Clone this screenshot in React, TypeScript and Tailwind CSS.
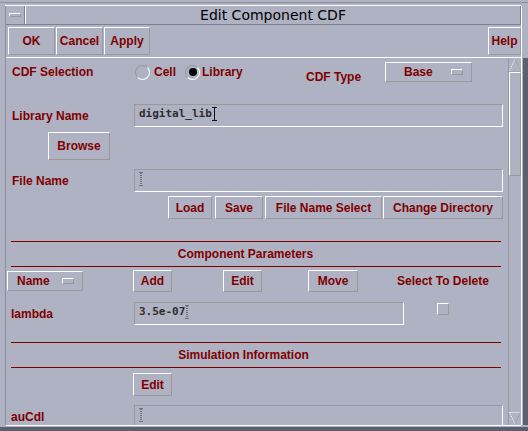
import React from "react"

// Motif-style bevels
const raised = "border border-t-white border-l-white border-b-[#999999] border-r-[#999999]"
const sunken = "border border-t-[#999999] border-l-[#999999] border-b-white border-r-white"
const label = "font-bold text-[12px] text-[#800000] leading-[14px] whitespace-nowrap"
const mono = "font-['DejaVu_Sans_Mono',monospace] font-bold text-[11px] text-[#2e2e2e] leading-[14px]"

function Btn({ text, className }: { text: string; className: string }) {
  return (
    <div className={`${raised} ${label} flex shrink-0 items-center justify-center ${className}`}>
      {text}
    </div>
  )
}

function Cursor({ active }: { active?: boolean }) {
  return active ? (
    <svg width="5" height="14" viewBox="0 0 5 14" className="shrink-0">
      <path d="M0 0.5H5M2.5 0.5V13.5M0 13.5H5" stroke="#111" strokeWidth="1" fill="none" />
    </svg>
  ) : (
    <svg width="5" height="14" viewBox="0 0 5 14" className="shrink-0">
      <path d="M0.5 0.5H3.5M2 1V13M0.5 13.5H3.5" stroke="#333" strokeWidth="1" strokeDasharray="1 1" fill="none" />
    </svg>
  )
}

function Field({ value, className, active }: { value?: string; className: string; active?: boolean }) {
  return (
    <div className={`${sunken} flex shrink-0 items-start pl-[4px] pt-[2px] ${className}`}>
      {value && <span className={mono}>{value}</span>}
      <Cursor active={active} />
    </div>
  )
}

function Radio({ on }: { on?: boolean }) {
  return (
    <div className="flex h-[15px] w-[15px] shrink-0 items-center justify-center rounded-full border border-t-[#999999] border-l-[#999999] border-b-white border-r-white">
      {on && <div className="h-[8px] w-[8px] rounded-full bg-black" />}
    </div>
  )
}

function Section({ title, textWidth }: { title: string; textWidth: string }) {
  return (
    <div className="flex flex-col">
      <div className="ml-[5px] h-[1px] w-[490px] bg-[#800000]" />
      <div className={`${label} flex h-[24px] items-center justify-center ${textWidth}`}>{title}</div>
      <div className="ml-[5px] h-[1px] w-[490px] bg-[#800000]" />
    </div>
  )
}

function Arrow({ down }: { down?: boolean }) {
  return down ? (
    <svg width="12" height="13" viewBox="0 0 12 13">
      <path d="M0.5 0.5H11.5" stroke="#fff" strokeDasharray="1 1" />
      <path d="M0.5 0.5L6 12" stroke="#fff" strokeDasharray="1 1" />
      <path d="M11.5 0.5L6 12" stroke="#999" strokeDasharray="1 1" />
    </svg>
  ) : (
    <svg width="12" height="14" viewBox="0 0 12 14">
      <path d="M6 1L0.5 13" stroke="#fff" strokeDasharray="1 1" />
      <path d="M6 1L11.5 13" stroke="#999" strokeDasharray="1 1" />
      <path d="M0.5 13.5H11.5" stroke="#999" strokeDasharray="1 1" />
    </svg>
  )
}

export default function App() {
  return (
    <div className="flex h-[431px] w-[528px] flex-col overflow-hidden bg-[#aeb2c3] font-['Liberation_Sans',Arial,sans-serif]">
      {/* top frame strip */}
      <div className="flex h-[6px] shrink-0 flex-col">
        <div className="h-[2px]" />
        <div className="h-[1px] bg-[#8d909c]" />
        <div className="h-[2px]" />
        <div className="ml-[5px] mr-[7px] h-[1px] bg-white" />
      </div>

      <div className="flex h-[419px] shrink-0">
        <div className="w-[5px] shrink-0" />

        <div className="flex w-[516px] shrink-0 flex-col border-l border-l-[#8d909c]">
          {/* title bar */}
          <div className="flex h-[19px] shrink-0 border-b border-b-[#7e8190]">
            <div className="flex w-[19px] shrink-0 items-center justify-center border-r border-r-[#7e8190]">
              <div className={`${raised} h-[4px] w-[12px]`} />
            </div>
            <div className="flex flex-1 items-center justify-center border-l border-l-white border-r border-r-[#7e8190] font-['DejaVu_Sans',sans-serif] text-[14px] leading-[16px] text-black">
              Edit Component CDF
            </div>
          </div>

          {/* action buttons */}
          <div className="flex h-[32px] shrink-0 items-start pl-[2px] pt-[2px]">
            <Btn text="OK" className="h-[28px] w-[47px]" />
            <Btn text="Cancel" className="ml-[1px] h-[28px] w-[47px]" />
            <Btn text="Apply" className="ml-[1px] h-[28px] w-[46px]" />
            <Btn text="Help" className="ml-auto h-[28px] w-[33px]" />
          </div>
          <div className="h-[1px] shrink-0 bg-white" />

          {/* scrolled form */}
          <div className="flex h-[367px] shrink-0">
            <div className="flex w-[502px] shrink-0 flex-col overflow-hidden">
              <div className="mt-[3px] flex h-[22px] shrink-0 items-center">
                <div className={`${label} w-[128px] pl-[6px]`}>CDF Selection</div>
                <div className="flex w-[172px] items-center">
                  <div className="ml-[1px]"><Radio /></div>
                  <span className={`${label} ml-[4px]`}>Cell</span>
                  <div className="ml-[9px]"><Radio on /></div>
                  <span className={`${label} ml-[2px]`}>Library</span>
                </div>
                <div className={`${label} mt-[10px] w-[79px]`}>CDF Type</div>
                <div className={`${raised} flex h-[20px] w-[87px] items-center`}>
                  <span className={`${label} ml-[18px]`}>Base</span>
                  <div className={`${raised} ml-auto mr-[8px] h-[6px] w-[12px]`} />
                </div>
              </div>

              <div className="mt-[21px] flex h-[23px] shrink-0 items-center">
                <div className={`${label} w-[128px] pl-[6px]`}>Library Name</div>
                <Field value="digital_lib" active className="h-[23px] w-[369px]" />
              </div>

              <div className="mt-[5px] flex shrink-0 pl-[42px]">
                <Btn text="Browse" className="h-[28px] w-[62px]" />
              </div>

              <div className="mt-[9px] flex h-[23px] shrink-0 items-center">
                <div className={`${label} w-[128px] pl-[6px]`}>File Name</div>
                <Field className="h-[23px] w-[369px]" />
              </div>

              <div className="mt-[4px] flex shrink-0 pl-[162px]">
                <Btn text="Load" className="h-[23px] w-[44px]" />
                <Btn text="Save" className="ml-[3px] h-[23px] w-[48px]" />
                <Btn text="File Name Select" className="ml-[2px] h-[23px] w-[117px]" />
                <Btn text="Change Directory" className="ml-[1px] h-[23px] w-[120px]" />
              </div>

              <div className="mt-[22px] shrink-0">
                <Section title="Component Parameters" textWidth="w-[479px]" />
              </div>

              <div className="mt-[3px] flex h-[22px] shrink-0 items-center">
                <div className={`${raised} ml-[1px] flex h-[20px] w-[76px] items-center`}>
                  <span className={`${label} ml-[9px]`}>Name</span>
                  <div className={`${raised} ml-auto mr-[8px] h-[6px] w-[12px]`} />
                </div>
                <Btn text="Add" className="ml-[50px] h-[22px] w-[39px]" />
                <Btn text="Edit" className="ml-[51px] h-[22px] w-[39px]" />
                <Btn text="Move" className="ml-[46px] h-[22px] w-[50px]" />
                <span className={`${label} ml-[39px]`}>Select To Delete</span>
              </div>

              <div className="mt-[10px] flex h-[23px] shrink-0 items-center">
                <div className={`${label} w-[128px] pl-[5px]`}>lambda</div>
                <Field value="3.5e-07" className="h-[23px] w-[270px]" />
                <div className={`${raised} mb-[9px] ml-[33px] h-[12px] w-[12px]`} />
              </div>

              <div className="mt-[17px] shrink-0">
                <Section title="Simulation Information" textWidth="w-[475px]" />
              </div>

              <div className="mt-[5px] flex shrink-0 pl-[127px]">
                <Btn text="Edit" className="h-[23px] w-[39px]" />
              </div>

              <div className="mt-[9px] flex h-[23px] shrink-0 items-center">
                <div className={`${label} w-[128px] pl-[5px]`}>auCdl</div>
                <Field className="h-[23px] w-[369px]" />
              </div>
            </div>

            {/* vertical scrollbar */}
            <div className="flex w-[13px] shrink-0 flex-col border-l border-l-[#999999]">
              <Arrow />
              <div className={`${raised} h-[104px] shrink-0`} />
              <div className="flex-1" />
              <Arrow down />
            </div>
          </div>
        </div>

        {/* right frame edge */}
        <div className="flex w-[7px] shrink-0">
          <div className="w-[1px] bg-white" />
          <div className="w-[1px]" />
          <div className="flex flex-1 flex-col">
            <div className="h-[52px]" />
            <div className="flex-1 bg-[#5c5f6d]" />
          </div>
        </div>
      </div>

      {/* bottom frame strip */}
      <div className="flex h-[6px] shrink-0 flex-col">
        <div className="ml-[6px] mr-[7px] h-[1px] bg-white" />
        <div className="h-[1px]" />
        <div className="flex-1 bg-[#5c5f6d]" />
      </div>
    </div>
  )
}
